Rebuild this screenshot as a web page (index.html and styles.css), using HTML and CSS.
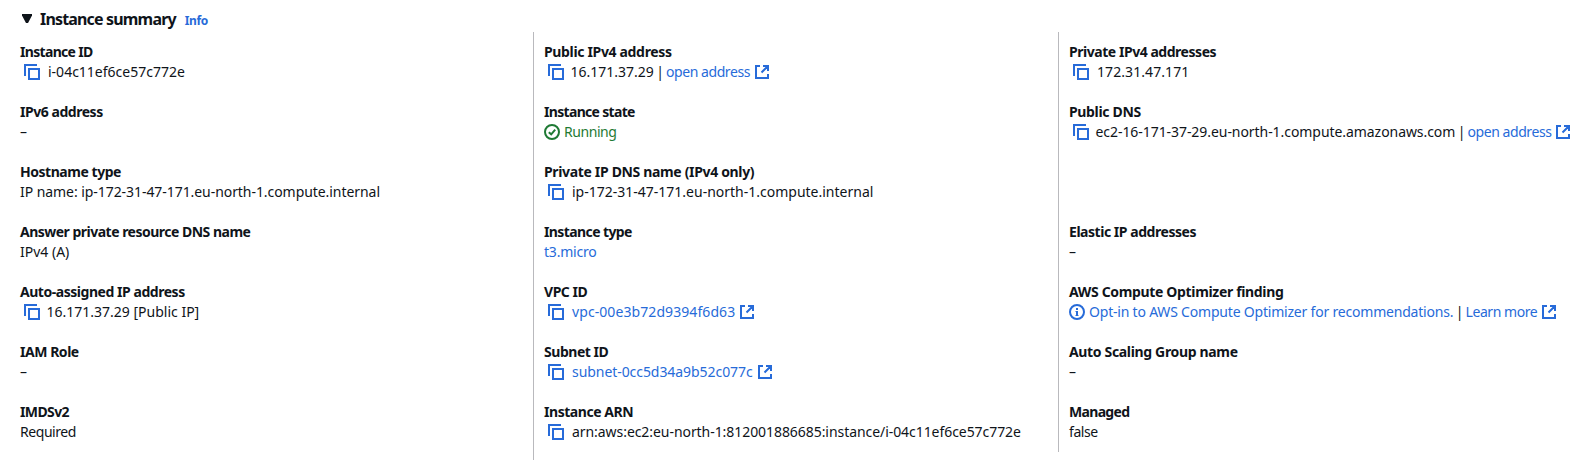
FILE: index.html
```html
<!DOCTYPE html>
<html lang="en">
<head>
<meta charset="utf-8">
<title>Instance summary</title>
<link rel="stylesheet" href="styles.css">
</head>
<body>
<svg class="sprite" aria-hidden="true">
  <symbol id="copy" viewBox="0 0 16 16"><path d="M1 12V1H13M5 5H15V15H5Z"/></symbol>
  <symbol id="ext" viewBox="0 0 14 14"><path d="M5 1H1V13H13V9M8 1H13V6M13 1L6.5 7.5"/></symbol>
  <symbol id="check" viewBox="0 0 16 16"><circle cx="8" cy="8" r="7"/><path d="M4.8 8.2L7.2 10.3L11.2 5.6"/></symbol>
  <symbol id="info" viewBox="0 0 16 16"><circle cx="8" cy="8" r="7"/><path d="M8 4V6M8 7V12"/><path stroke-width="1" d="M6.5 7.5H8M6.5 11.5H9.5"/></symbol>
</svg>
<header class="head">
  <svg class="caret" viewBox="0 0 10 9"><path d="M0 0H10V1.5L6 9H4L0 1.5Z"/></svg>
  <h2 class="title">Instance summary</h2>
  <a class="info-link">Info</a>
</header>
<main class="columns">
  <section class="col">
    <div class="item"><div class="label s7">Instance ID</div><div class="value"><svg class="copy"><use href="#copy"/></svg><span>i-04c11ef6ce57c772e</span></div></div>
    <div class="item"><div class="label">IPv6 address</div><div class="value">–</div></div>
    <div class="item"><div class="label">Hostname type</div><div class="value s1">IP name: ip-172-31-47-171.eu-north-1.compute.internal</div></div>
    <div class="item"><div class="label s5">Answer private resource DNS name</div><div class="value">IPv4 (A)</div></div>
    <div class="item"><div class="label">Auto-assigned IP address</div><div class="value"><svg class="copy tight"><use href="#copy"/></svg><span>16.171.37.29 [Public IP]</span></div></div>
    <div class="item"><div class="label">IAM Role</div><div class="value">–</div></div>
    <div class="item"><div class="label s6">IMDSv2</div><div class="value s4">Required</div></div>
  </section>
  <section class="col ruled">
    <div class="item"><div class="label s3">Public IPv4 address</div><div class="value"><svg class="copy tight"><use href="#copy"/></svg><span>16.171.37.29</span><span class="bar">|</span><a class="link s4">open address</a><svg class="ext"><use href="#ext"/></svg></div></div>
    <div class="item"><div class="label s7">Instance state</div><div class="value ok s4"><svg class="status"><use href="#check"/></svg><span>Running</span></div></div>
    <div class="item"><div class="label s3">Private IP DNS name (IPv4 only)</div><div class="value"><svg class="copy"><use href="#copy"/></svg><span>ip-172-31-47-171.eu-north-1.compute.internal</span></div></div>
    <div class="item"><div class="label s6">Instance type</div><div class="value"><a class="link s2">t3.micro</a></div></div>
    <div class="item"><div class="label">VPC ID</div><div class="value"><svg class="copy"><use href="#copy"/></svg><a class="link s0">vpc-00e3b72d9394f6d63</a><svg class="ext"><use href="#ext"/></svg></div></div>
    <div class="item"><div class="label">Subnet ID</div><div class="value"><svg class="copy"><use href="#copy"/></svg><a class="link s1">subnet-0cc5d34a9b52c077c</a><svg class="ext"><use href="#ext"/></svg></div></div>
    <div class="item"><div class="label">Instance ARN</div><div class="value s1"><svg class="copy"><use href="#copy"/></svg><span>arn:aws:ec2:eu-north-1:812001886685:instance/i-04c11ef6ce57c772e</span></div></div>
  </section>
  <section class="col ruled last">
    <div class="item"><div class="label">Private IPv4 addresses</div><div class="value s0"><svg class="copy"><use href="#copy"/></svg><span>172.31.47.171</span></div></div>
    <div class="item"><div class="label s3">Public DNS</div><div class="value"><svg class="copy tight"><use href="#copy"/></svg><span class="s1">ec2-16-171-37-29.eu-north-1.compute.amazonaws.com</span><span class="bar">|</span><a class="link s4">open address</a><svg class="ext"><use href="#ext"/></svg></div></div>
    <div class="item"></div>
    <div class="item"><div class="label">Elastic IP addresses</div><div class="value">–</div></div>
    <div class="item"><div class="label s3">AWS Compute Optimizer finding</div><div class="value"><svg class="status blue"><use href="#info"/></svg><a class="link s2">Opt-in to AWS Compute Optimizer for recommendations.</a><span class="bar">|</span><a class="link s4">Learn more</a><svg class="ext"><use href="#ext"/></svg></div></div>
    <div class="item"><div class="label s3">Auto Scaling Group name</div><div class="value">–</div></div>
    <div class="item"><div class="label s7">Managed</div><div class="value s4">false</div></div>
  </section>
</main>
</body>
</html>
```
FILE: styles.css
```css
* { box-sizing: border-box; }
body {
  margin: 0;
  height: 460px;
  overflow: hidden;
  background: #fff;
  color: #0f141a;
  font: 14px/20px "Noto Sans", "Open Sans", sans-serif;
}
svg { fill: none; stroke: #276bd9; stroke-width: 2; flex: none; }
.sprite { display: none; }

.head { display: flex; align-items: baseline; height: 32px; padding: 8px 0 0 22px; }
.caret { width: 10px; height: 9px; fill: #0f141a; stroke: none; margin-right: 8px; transform: translateY(-2px); }
.title { margin: 0; font-size: 16px; line-height: 22px; font-weight: 700; letter-spacing: -0.83px; }
.info-link { margin-left: 9px; font-size: 12px; font-weight: 700; color: #276bd9; letter-spacing: -0.4px; }

.columns { display: grid; grid-template-columns: 533px 525px 1fr; align-items: start; }
.col { display: grid; grid-auto-rows: 40px; row-gap: 20px; padding: 10px 0 0 20px; height: 428px; }
.ruled { border-left: 1px solid #b9b9bd; padding-left: 10px; }
.last { height: 420px; }

.label { font-weight: 700; letter-spacing: -0.46px; }
.value { display: flex; align-items: center; white-space: nowrap; }
.link { color: #276bd9; }
.bar { margin: 0 2px 0 2.5px; }
.copy { width: 16px; height: 16px; margin: 0 8px 0 4px; }
.copy.tight { margin-right: 6.5px; }
.ext { width: 14px; height: 14px; margin-left: 5px; }
.status { width: 16px; height: 16px; margin-right: 4px; stroke: #1f7a34; }
.status.blue { stroke: #276bd9; }
.ok { color: #1f7a34; }

/* Tracking steps */
.s0 { letter-spacing: 0.08px; }
.s1 { letter-spacing: -0.06px; }
.s2 { letter-spacing: -0.2px; }
.s3 { letter-spacing: -0.33px; }
.s4 { letter-spacing: -0.44px; }
.s5 { letter-spacing: -0.51px; }
.label.s3 { letter-spacing: -0.34px; }
.label.s5 { letter-spacing: -0.51px; }
.label.s6 { letter-spacing: -0.6px; }
.label.s7 { letter-spacing: -0.68px; }
```
